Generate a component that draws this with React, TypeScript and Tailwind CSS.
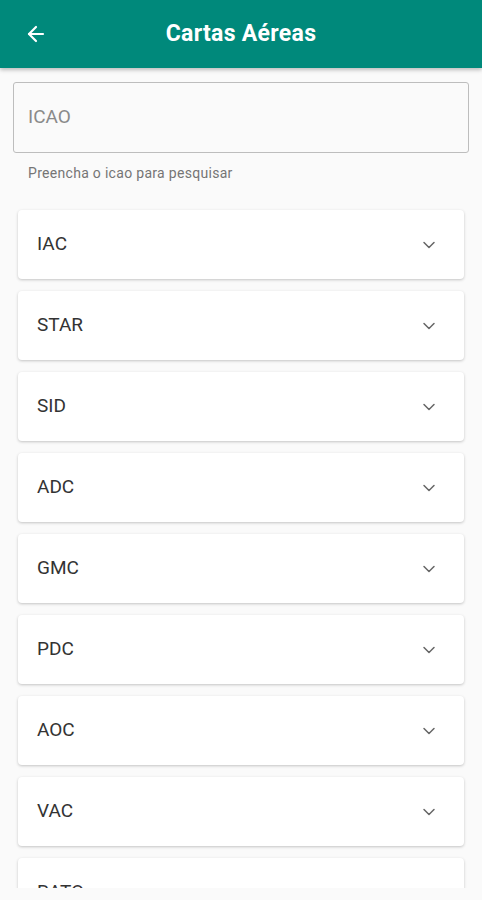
import { ArrowLeft, ChevronDown } from "lucide-react";

const cartas = ["IAC", "STAR", "SID", "ADC", "GMC", "PDC", "AOC", "VAC", "RATO"];

export default function App() {
  return (
    <div className="flex h-[900px] w-[482px] flex-col overflow-hidden bg-[#fafafa] font-['Roboto',sans-serif]">
      {/* header */}
      <header className="relative z-10 flex h-[68px] shrink-0 items-center bg-[#00897b] px-6 shadow-[0_2px_4px_rgba(0,0,0,0.25)]">
        <ArrowLeft className="h-6 w-6 text-white" strokeWidth={2.2} />
        <h1 className="flex-1 pr-6 text-center text-[23px] font-bold tracking-[0.3px] text-white">Cartas Aéreas</h1>
      </header>

      <div className="h-[820px] overflow-hidden">
        {/* busca */}
        <div className="px-[13px] pt-[14px]">
          <div className="flex h-[71px] items-center rounded-[3px] border border-[#bdbdbd] px-[14px]">
            <span className="text-[19px] text-[#8a8a8a]">ICAO</span>
          </div>
          <p className="mt-[10px] px-[15px] text-[14px] tracking-[0.3px] text-[#757575]">Preencha o icao para pesquisar</p>
        </div>

        {/* lista */}
        <div className="mt-[26px] flex flex-col gap-[12px] px-[18px]">
          {cartas.map((c) => (
            <div
              key={c}
              className="flex h-[69px] shrink-0 items-center justify-between rounded-[4px] bg-white pl-[19px] pr-[25px] shadow-[0_1px_3px_rgba(0,0,0,0.22)]"
            >
              <span className="text-[19px] text-[#333333]">{c}</span>
              <ChevronDown className="h-5 w-5 text-[#666666]" strokeWidth={1.8} />
            </div>
          ))}
        </div>
      </div>
    </div>
  );
}
